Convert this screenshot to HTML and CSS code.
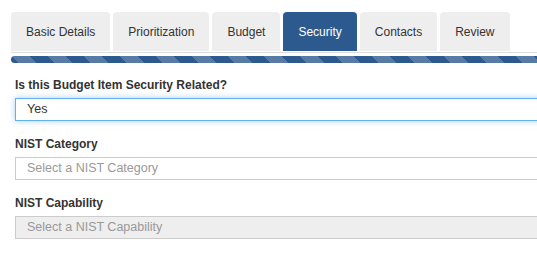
FILE: index.html
```html
<!DOCTYPE html>
<html lang="en">
<head>
    <meta charset="UTF-8">
    <meta name="viewport" content="width=device-width, initial-scale=1.0">
    <title>Budget Item - Security</title>
    <link rel="stylesheet" href="styles.css">
</head>
<body>
    <div class="wizard">
        <ul class="tabs">
            <li class="tab">Basic Details</li>
            <li class="tab">Prioritization</li>
            <li class="tab">Budget</li>
            <li class="tab active">Security</li>
            <li class="tab">Contacts</li>
            <li class="tab">Review</li>
        </ul>

        <div class="progress">
            <div class="progress-bar"></div>
        </div>

        <form class="step-form">
            <div class="form-group">
                <label class="field-label">Is this Budget Item Security Related?</label>
                <div class="field focused">Yes</div>
            </div>

            <div class="form-group">
                <label class="field-label">NIST Category</label>
                <div class="field placeholder">Select a NIST Category</div>
            </div>

            <div class="form-group">
                <label class="field-label">NIST Capability</label>
                <div class="field placeholder disabled">Select a NIST Capability</div>
            </div>
        </form>
    </div>
</body>
</html>
```

FILE: styles.css
```css
/* Global Styles */
body {
    font-family: 'Liberation Sans', Arial, sans-serif;
    font-size: 12px;
    line-height: 14px;
    margin: 0;
    padding: 0;
    background-color: #fff;
    color: #333;
    overflow: hidden;
}

/* Tabs */
.wizard {
    padding: 12px 0 0 11px;
}

.tabs {
    display: flex;
    gap: 3px;
    list-style: none;
    margin: 0;
    padding: 0;
    border-bottom: 1px solid #ddd;
}

.tab {
    height: 38px;
    line-height: 38px;
    padding: 1px 15px 0;
    background-color: #eee;
    border-radius: 4px 4px 0 0;
    color: #333;
    margin-bottom: 1px;
}

.tab.active {
    background-color: #2d5a8e;
    color: #fff;
}

/* Progress bar */
.progress {
    margin-top: 3px;
    height: 7px;
    overflow: hidden;
    border-radius: 4px 0 0 4px;
}

.progress-bar {
    height: 100%;
    width: 100%;
    background-color: #2d5a8e;
    background-image: linear-gradient(45deg,
        rgba(255, 255, 255, 0.2) 25%, transparent 25%,
        transparent 50%, rgba(255, 255, 255, 0.2) 50%,
        rgba(255, 255, 255, 0.2) 75%, transparent 75%, transparent);
    background-size: 36px 36px;
}

/* Form */
.step-form {
    padding: 15px 0 0 4px;
}

.form-group {
    margin-bottom: 16px;
}

.field-label {
    display: block;
    font-weight: bold;
    color: #333;
    margin-bottom: 6px;
}

.field {
    width: 560px;
    height: 21px;
    line-height: 21px;
    padding: 0 11px;
    border: 1px solid #ccc;
    color: #333;
    font-size: 12.5px;
}

.field.focused {
    border-color: #66afe9;
    box-shadow: 0 0 6px rgba(102, 175, 233, 0.6);
}

.field.placeholder {
    color: #999;
}

.field.disabled {
    background-color: #eee;
}
```
